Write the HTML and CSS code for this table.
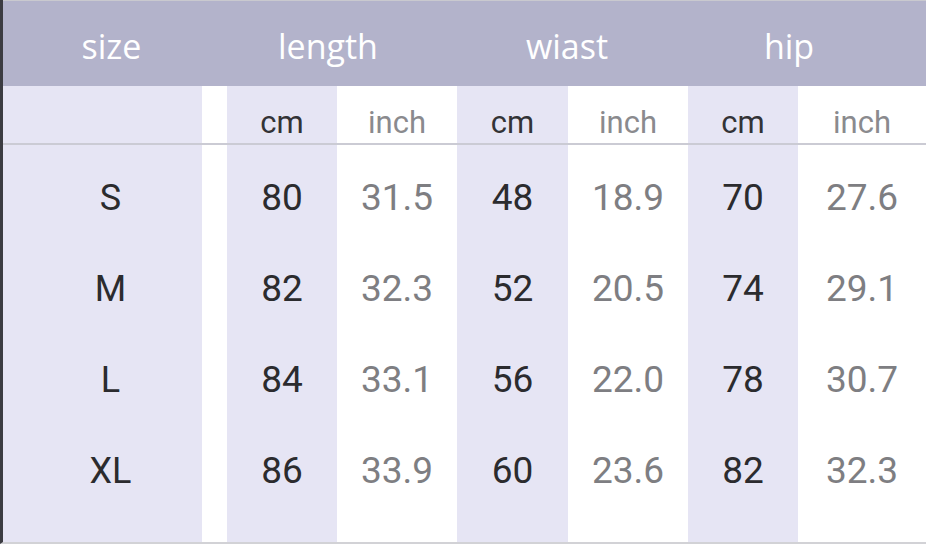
FILE: index.html
```html
<!DOCTYPE html>
<html lang="en">
<head>
<meta charset="utf-8">
<title>Size chart</title>
<link rel="stylesheet" href="styles.css">
</head>
<body>
<div class="sheet">
  <div class="head">
    <div class="h">size</div>
    <div class="h">length</div>
    <div class="h">wiast</div>
    <div class="h">hip</div>
    <div></div>
  </div>
  <div class="body">
    <div class="col tint sizecol">
      <div class="unit"></div>
      <div class="val first">S</div>
      <div class="val">M</div>
      <div class="val">L</div>
      <div class="val">XL</div>
    </div>
    <div class="col gap">
      <div class="unit"></div>
    </div>
    <div class="col tint">
      <div class="unit cm">cm</div>
      <div class="val first">80</div>
      <div class="val">82</div>
      <div class="val">84</div>
      <div class="val">86</div>
    </div>
    <div class="col inch">
      <div class="unit">inch</div>
      <div class="val first">31.5</div>
      <div class="val">32.3</div>
      <div class="val">33.1</div>
      <div class="val">33.9</div>
    </div>
    <div class="col tint">
      <div class="unit cm">cm</div>
      <div class="val first">48</div>
      <div class="val">52</div>
      <div class="val">56</div>
      <div class="val">60</div>
    </div>
    <div class="col inch">
      <div class="unit">inch</div>
      <div class="val first">18.9</div>
      <div class="val">20.5</div>
      <div class="val">22.0</div>
      <div class="val">23.6</div>
    </div>
    <div class="col tint">
      <div class="unit cm">cm</div>
      <div class="val first">70</div>
      <div class="val">74</div>
      <div class="val">78</div>
      <div class="val">82</div>
    </div>
    <div class="col inch">
      <div class="unit">inch</div>
      <div class="val first">27.6</div>
      <div class="val">29.1</div>
      <div class="val">30.7</div>
      <div class="val">32.3</div>
    </div>
  </div>
</div>
</body>
</html>
```
FILE: styles.css
```css
html, body {
  margin: 0;
  padding: 0;
  background: #ffffff;
}

.sheet {
  width: 926px;
  height: 544px;
  box-sizing: border-box;
  border-left: 3px solid #3c3c42;
  border-bottom: 2px solid #d2d2d6;
  display: flex;
  flex-direction: column;
  overflow: hidden;
}

.head {
  height: 86px;
  box-sizing: border-box;
  border-top: 1px solid #c9c9cf;
  background: #b3b3cb;
  display: grid;
  grid-template-columns: 217px 216px 262px 182px 1fr;
  align-items: center;
  padding-top: 5px;
}

.h {
  font-family: "Open Sans", "Noto Sans", sans-serif;
  font-size: 34px;
  color: #ffffff;
  text-align: center;
}

.body {
  flex: 1;
  display: flex;
  font-family: Roboto, "Noto Sans", sans-serif;
}

.col {
  display: flex;
  flex-direction: column;
  width: 110px;
  background: #ffffff;
}

.col.tint {
  background: #e6e5f4;
}

.col.sizecol {
  width: 199px;
}

.col.gap {
  width: 25px;
}

.col.inch {
  width: 120px;
  color: #7e7e82;
}

.col:nth-child(5) {
  width: 111px;
}

.col:last-child {
  flex: 1;
}

.unit {
  height: 59px;
  box-sizing: border-box;
  padding-top: 16px;
  border-bottom: 2px solid #cbcbd4;
  display: flex;
  align-items: center;
  justify-content: center;
  font-size: 31px;
  color: #8a8a8e;
}

.unit.cm {
  color: #333336;
}

.val {
  height: 91px;
  display: flex;
  align-items: center;
  justify-content: center;
  font-size: 37px;
  color: #2b2b2e;
}

.col.inch .val {
  color: #7e7e82;
}

.val.first {
  margin-top: 7px;
}

.sizecol .val {
  padding-left: 16px;
  font-size: 36px;
}
```
